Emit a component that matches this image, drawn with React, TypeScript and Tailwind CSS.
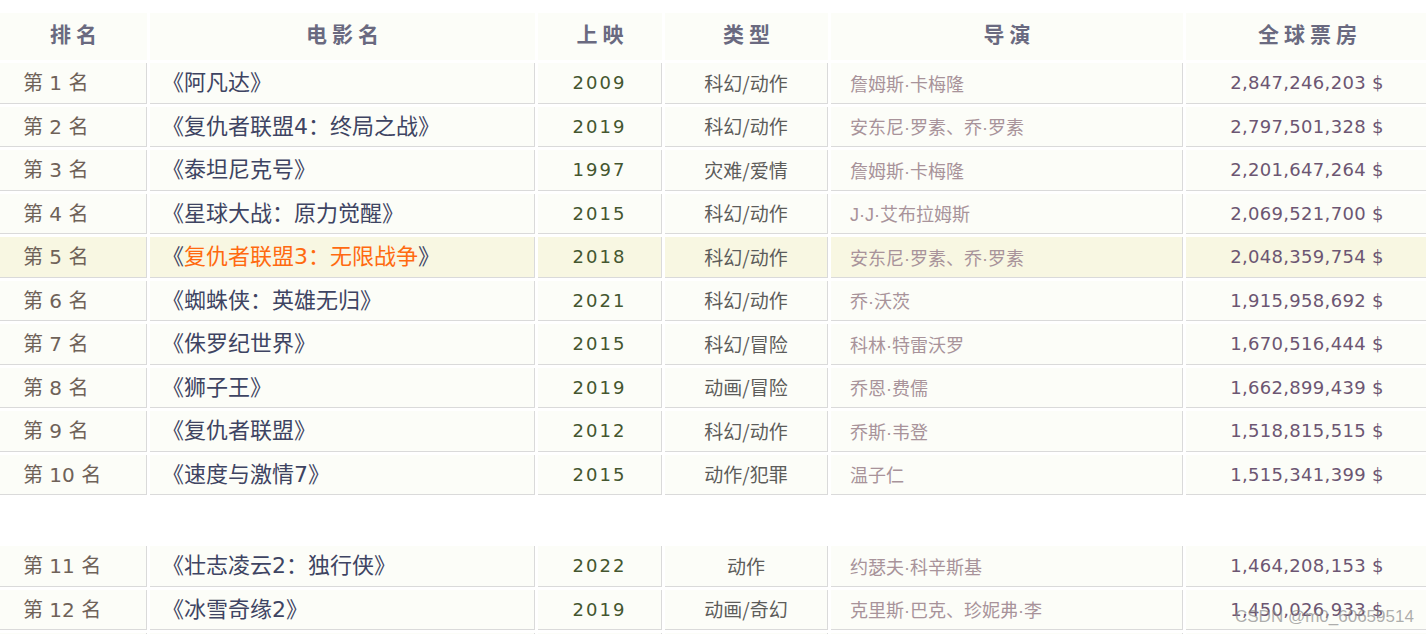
import React from 'react';

type Movie = {
  rank: number;
  name: string;
  year: string;
  genre: string;
  director: string;
  gross: string;
};

const movies: Movie[] = [
  { rank: 1, name: '阿凡达', year: '2009', genre: '科幻/动作', director: '詹姆斯·卡梅隆', gross: '2,847,246,203' },
  { rank: 2, name: '复仇者联盟4：终局之战', year: '2019', genre: '科幻/动作', director: '安东尼·罗素、乔·罗素', gross: '2,797,501,328' },
  { rank: 3, name: '泰坦尼克号', year: '1997', genre: '灾难/爱情', director: '詹姆斯·卡梅隆', gross: '2,201,647,264' },
  { rank: 4, name: '星球大战：原力觉醒', year: '2015', genre: '科幻/动作', director: 'J·J·艾布拉姆斯', gross: '2,069,521,700' },
  { rank: 5, name: '复仇者联盟3：无限战争', year: '2018', genre: '科幻/动作', director: '安东尼·罗素、乔·罗素', gross: '2,048,359,754' },
  { rank: 6, name: '蜘蛛侠：英雄无归', year: '2021', genre: '科幻/动作', director: '乔·沃茨', gross: '1,915,958,692' },
  { rank: 7, name: '侏罗纪世界', year: '2015', genre: '科幻/冒险', director: '科林·特雷沃罗', gross: '1,670,516,444' },
  { rank: 8, name: '狮子王', year: '2019', genre: '动画/冒险', director: '乔恩·费儒', gross: '1,662,899,439' },
  { rank: 9, name: '复仇者联盟', year: '2012', genre: '科幻/动作', director: '乔斯·韦登', gross: '1,518,815,515' },
  { rank: 10, name: '速度与激情7', year: '2015', genre: '动作/犯罪', director: '温子仁', gross: '1,515,341,399' },
];

const moreMovies: Movie[] = [
  { rank: 11, name: '壮志凌云2：独行侠', year: '2022', genre: '动作', director: '约瑟夫·科辛斯基', gross: '1,464,208,153' },
  { rank: 12, name: '冰雪奇缘2', year: '2019', genre: '动画/奇幻', director: '克里斯·巴克、珍妮弗·李', gross: '1,450,026,933' },
  { rank: 13, name: '哈利·波特与死亡圣器(下)', year: '2011', genre: '奇幻/冒险', director: '大卫·叶茨', gross: '1,342,321,665' },
];

const cjk = "font-['Noto_Sans_CJK_SC',sans-serif]";
const verdana = "font-['DejaVu_Sans','Noto_Sans_CJK_SC',sans-serif]";
const latin = "font-['Liberation_Sans','Noto_Sans_CJK_SC',sans-serif]";
const cell = 'h-[40.5px] border-r border-b border-[#dadada] align-middle whitespace-nowrap';

const Row: React.FC<{ m: Movie }> = ({ m }) => {
  const hot = m.rank === 5;
  const bg = hot ? 'bg-[#f8f7e2]' : 'bg-[#fcfdf8]';
  return (
    <tr>
      <td className={`${cell} ${bg} pl-[23px] text-[20px] text-[#6f6258] ${verdana}`}>
        <span className={cjk}>第</span> {m.rank} <span className={cjk}>名</span>
      </td>
      <td className={`${cell} ${bg} pl-[12px] text-[22px] text-[#3e4462] ${verdana}`}>
        《<span className={hot ? 'text-[#ff6a10]' : ''}>{m.name}</span>》
      </td>
      <td className={`${cell} ${bg} text-center text-[18px] tracking-[2px] text-[#44562f] ${verdana}`}>
        {m.year}
      </td>
      <td className={`${cell} ${bg} text-center text-[19px] text-[#5c5c5a] ${cjk}`}>{m.genre}</td>
      <td className={`${cell} ${bg} pl-[19px] pt-[5px] text-[18px] text-[#a8939a] ${latin}`}>{m.director}</td>
      <td className={`${cell} ${bg} text-center text-[18px] tracking-[0.3px] text-[#6c5672] ${verdana}`}>
        {m.gross} $
      </td>
    </tr>
  );
};

export default function App() {
  const heads = ['排名', '电影名', '上映', '类型', '导演', '全球票房'];
  return (
    <div className="relative min-h-screen overflow-hidden bg-white">
      <div className="pt-[10px] -ml-[3px]">
        <table className="table-fixed border-separate border-spacing-[3px] w-[1435px]">
          <colgroup>
            <col className="w-[147px]" />
            <col className="w-[385px]" />
            <col className="w-[124px]" />
            <col className="w-[163px]" />
            <col className="w-[352px]" />
            <col className="w-[243px]" />
          </colgroup>
          <thead>
            <tr>
              {heads.map((h) => (
                <th
                  key={h}
                  className={`h-[47px] bg-[#fcfdf8] pb-[5px] text-center text-[21px] font-bold tracking-[5px] pl-[5px] text-[#6a6a80] ${cjk}`}
                >
                  {h}
                </th>
              ))}
            </tr>
          </thead>
          <tbody>
            {movies.map((m) => (
              <Row key={m.rank} m={m} />
            ))}
            <tr>
              <td colSpan={6} className="h-[45px]" />
            </tr>
            {moreMovies.map((m) => (
              <Row key={m.rank} m={m} />
            ))}
          </tbody>
        </table>
      </div>
      <div className="absolute left-[1235px] top-[604px] text-[17px] text-[#8a8a8a]/70 font-['Liberation_Sans',sans-serif]">
        CSDN @m0_60659514
      </div>
    </div>
  );
}
